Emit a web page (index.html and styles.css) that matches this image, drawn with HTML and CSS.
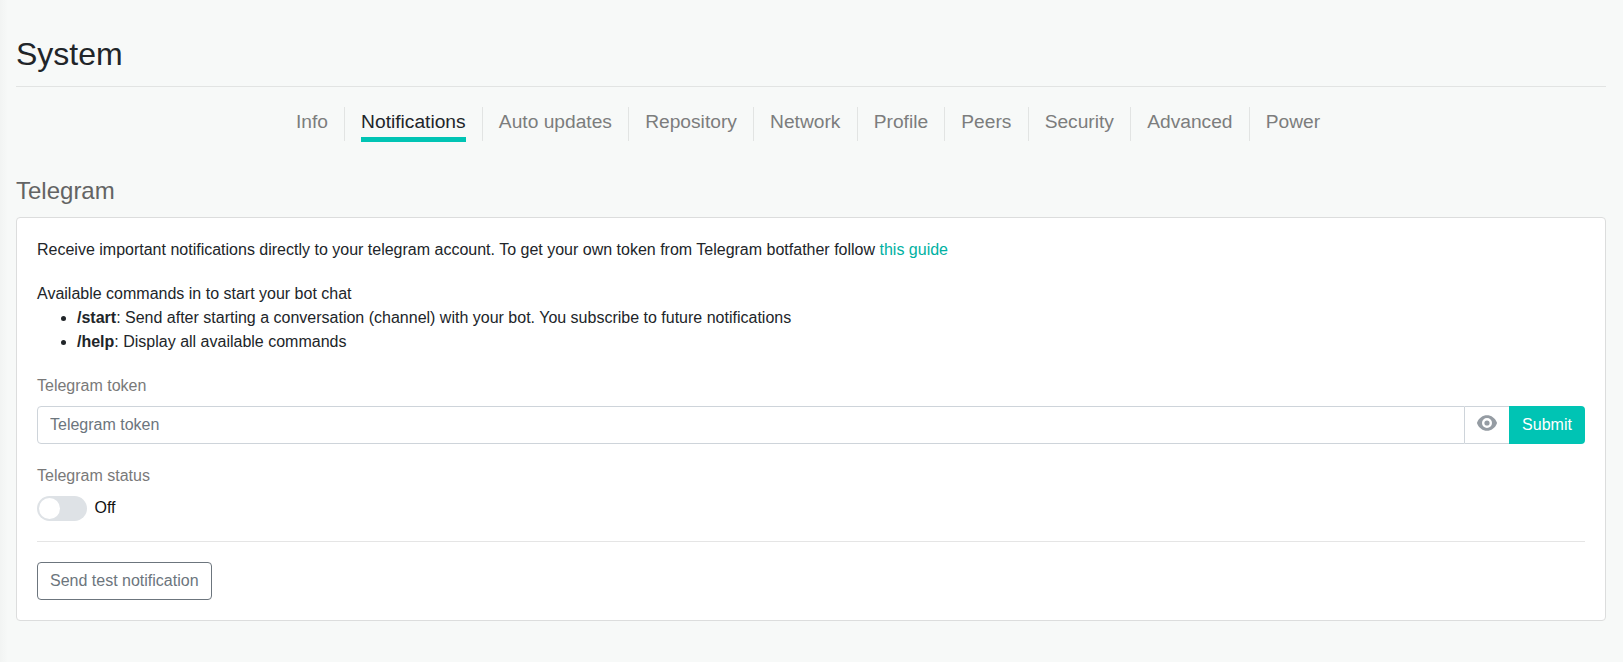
FILE: index.html
```html
<!DOCTYPE html>
<html lang="en">
<head>
<meta charset="utf-8">
<title>System</title>
<link rel="stylesheet" href="styles.css">
</head>
<body>
<main class="page">
  <h1 class="page-title">System</h1>
  <nav class="tabs">
    <a class="tab"><span>Info</span></a>
    <a class="tab active"><span>Notifications</span></a>
    <a class="tab"><span>Auto updates</span></a>
    <a class="tab"><span>Repository</span></a>
    <a class="tab"><span>Network</span></a>
    <a class="tab"><span>Profile</span></a>
    <a class="tab"><span>Peers</span></a>
    <a class="tab"><span>Security</span></a>
    <a class="tab"><span>Advanced</span></a>
    <a class="tab"><span>Power</span></a>
  </nav>
  <h2 class="section-title">Telegram</h2>
  <section class="card">
    <p>Receive important notifications directly to your telegram account. To get your own token from Telegram botfather follow <a class="link">this guide</a></p>
    <div>
      <p>Available commands in to start your bot chat</p>
      <ul class="commands">
        <li><b>/start</b>: Send after starting a conversation (channel) with your bot. You subscribe to future notifications</li>
        <li><b>/help</b>: Display all available commands</li>
      </ul>
    </div>
    <div class="field">
      <label class="label" for="token">Telegram token</label>
      <div class="input-group">
        <input class="input" id="token" type="text" placeholder="Telegram token">
        <button class="reveal" type="button" aria-label="Show token">
          <svg class="eye" viewBox="0 0 20 16"><path fill="currentColor" fill-rule="evenodd" d="M10 .3C5.700.3 2 3 .2 7.300a1.700 1.700 0 0 0 0 1.400C2 13 5.700 15.700 10 15.700s8-2.700 9.800-7a1.700 1.700 0 0 0 0-1.400C18 3 14.300.3 10 .3zM10 13a5 5 0 1 1 0-10 5 5 0 0 1 0 10z"/><circle cx="10" cy="8" r="2.600" fill="currentColor"/></svg>
        </button>
        <button class="submit" type="button">Submit</button>
      </div>
    </div>
    <div class="field">
      <span class="label">Telegram status</span>
      <div class="status"><span class="switch"></span><span class="state">Off</span></div>
    </div>
    <hr class="rule">
    <button class="test" type="button">Send test notification</button>
  </section>
</main>
</body>
</html>
```
FILE: styles.css
```css
* { box-sizing: border-box; }
body {
  margin: 0;
  min-height: 662px;
  background: linear-gradient(90deg, #f2f4f3, #f7f9f8 8px);
  color: #212529;
  font: 16px/24px "Liberation Sans", Arial, sans-serif;
}
h1, h2, p, ul { margin: 0; font-weight: 400; }
button, input { font: inherit; margin: 0; }
.page { padding: 35px 17px 0 16px; }
.page-title {
  height: 52px;
  border-bottom: 1px solid #e2e4e3;
  font-size: 32px;
  line-height: 38px;
}
.tabs {
  display: flex;
  justify-content: center;
  padding: 20px 6px 0 0;
}
.tab {
  height: 34px;
  padding: 0 16.12px;
  border-right: 1px solid #e2e4e3;
  color: #7c7d7d;
  font-size: 19.2px;
  line-height: 29px;
}
.tab:last-child { border-right: 0; }
.tab span { display: block; height: 35px; }
.active { color: #212529; }
.active span { border-bottom: 5px solid #00c4b4; }
.section-title {
  margin: 35px 0 12px;
  color: #636464;
  font-size: 24px;
  line-height: 29px;
}
.card {
  display: flex;
  flex-direction: column;
  gap: 20px;
  padding: 20px;
  border: 1px solid #dcdddd;
  border-radius: 4px;
  background: #fff;
}
.link { color: #00b1a2; }
.commands { padding-left: 40px; }
.field { display: flex; flex-direction: column; gap: 8px; }
.label { color: #797979; }
.input-group { display: flex; height: 38px; }
.input {
  flex: 1;
  min-width: 0;
  padding: 6px 12px;
  border: 1px solid #ced4da;
  border-radius: 4px 0 0 4px;
  background: #fff;
}
.input::placeholder { color: #6c757d; opacity: 1; }
.reveal {
  display: flex;
  width: 44px;
  padding: 8px 0 0 12px;
  border: solid #ced4da;
  border-width: 1px 0;
  background: #fff;
  color: #959ca3;
}
.eye { width: 20px; height: 16px; }
.submit {
  width: 76px;
  padding: 0;
  border: 0;
  border-radius: 0 4px 4px 0;
  background: #00c4b4;
  color: #fff;
}
.status { display: flex; gap: 7.500px; height: 25px; }
.state { line-height: 23px; color: #111; }
.switch {
  width: 50px;
  height: 25px;
  padding: 2px;
  border-radius: 13px;
  background: #dee2e6;
}
.switch::before {
  content: "";
  display: block;
  width: 21px;
  height: 21px;
  border-radius: 50%;
  background: #fff;
}
.rule { width: 100%; height: 1px; margin: 0; border: 0; background: #e5e5e5; }
.test {
  align-self: flex-start;
  height: 38px;
  padding: 0 12px;
  border: 1px solid #6c757d;
  border-radius: 4px;
  background: #fff;
  color: #6c757d;
}
```
